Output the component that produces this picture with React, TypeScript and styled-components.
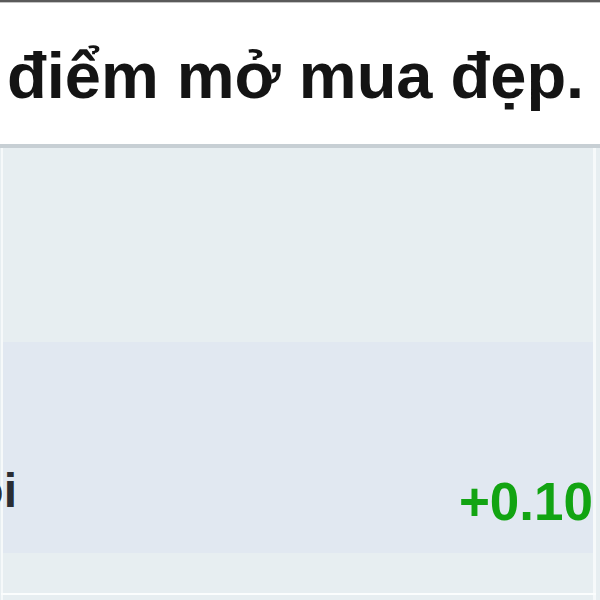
import styled, { createGlobalStyle } from 'styled-components';

const GlobalStyle = createGlobalStyle`
    html, body {
        margin: 0;
        padding: 0;
        background: #ffffff;
        overflow: hidden;
    }
    body {
        font-family: "Liberation Sans", Arial, sans-serif;
    }
`;

const Page = styled.div`
    width: 600px;
    height: 600px;
    overflow: hidden;
    display: flex;
    flex-direction: column;
    border-top: 2px solid #5a5a5a;
    box-sizing: border-box;
`;

const Header = styled.div`
    height: 146px;
    flex-shrink: 0;
    box-sizing: border-box;
    padding: 40px 0 0 7px;
    background: #ffffff;
    border-top: 1px solid #c4c4c4;
    border-bottom: 4px solid #c7cfd4;
    white-space: nowrap;
`;

const Title = styled.h1`
    margin: 0;
    font-size: 65px;
    line-height: 1;
    font-weight: bold;
    color: #141414;
`;

const Frame = styled.div`
    flex: 1;
    min-height: 0;
    background: #e7eef1;
    padding: 0 4px 0 1px;
`;

const Inner = styled.div`
    display: flex;
    flex-direction: column;
    border-left: 2px solid #f6f9fa;
    border-right: 3px solid #f6f9fa;
    height: 100%;
`;

const Row = styled.div<{ $h: number; $bg: string }>`
    height: ${(p) => p.$h}px;
    background: ${(p) => p.$bg};
    display: flex;
    align-items: flex-start;
    justify-content: space-between;
    flex-shrink: 0;
`;

const Label = styled.div`
    width: 14px;
    margin-top: 125px;
    display: flex;
    justify-content: flex-end;
    white-space: nowrap;
    font-size: 48px;
    line-height: 1;
    font-weight: bold;
    color: #2a2d33;
`;

const Change = styled.div`
    margin-top: 133px;
    font-size: 53px;
    line-height: 1;
    font-weight: bold;
    color: #12a412;
    white-space: nowrap;
`;

const Divider = styled.div`
    height: 2px;
    background: #fbfdfd;
    margin: 0 -3px 0 -2px;
    flex-shrink: 0;
`;

export default function App() {
    return (
        <>
            <GlobalStyle />
            <Page>
                <Header>
                    <Title>điểm mở mua đẹp.</Title>
                </Header>
                <Frame>
                    <Inner>
                        <Row $h={194} $bg="#e7eef1" />
                        <Row $h={211} $bg="#e1e8f1">
                            <Label>
                                <span>Điểm đáng coi</span>
                            </Label>
                            <Change>+0.10</Change>
                        </Row>
                        <Row $h={40} $bg="#e7eef1" />
                        <Divider />
                        <Row $h={20} $bg="#e7eef1" />
                    </Inner>
                </Frame>
            </Page>
        </>
    );
}
